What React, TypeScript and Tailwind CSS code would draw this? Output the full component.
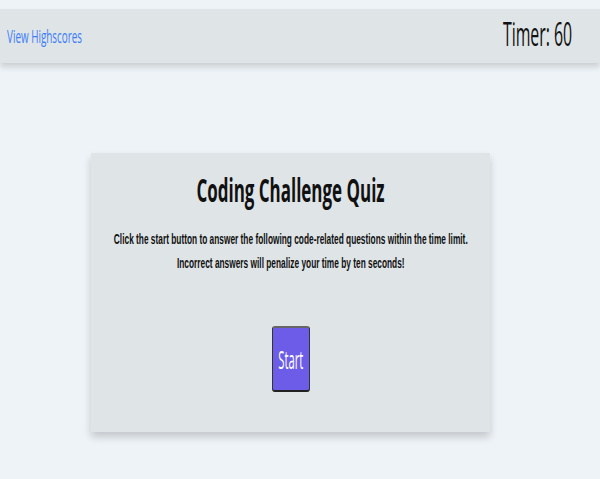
import React from "react";

export default function App() {
    return (
        <div className="min-h-[479px] bg-[#eef3f7] pt-[9px] pb-[47px] font-['Open_Sans',sans-serif]">
            {/* header bar */}
            <header className="h-[54px] bg-[#dfe4e7] shadow-[0_4px_6px_rgba(0,0,0,0.15)] flex items-center justify-between pl-[7px] pr-[28px]">
                <a href="#" className="block text-[19px] leading-none text-[#3b7df7] scale-x-[0.52] origin-left whitespace-nowrap">
                    View Highscores
                </a>
                <div className="text-[33px] leading-none text-[#111] scale-x-[0.48] origin-right whitespace-nowrap -mt-[6px]">
                    Timer: 60
                </div>
            </header>

            {/* quiz card */}
            <main className="mt-[90px] ml-[91px] w-[399px] h-[279px] bg-[#dfe4e7] shadow-[0_5px_8px_rgba(0,0,0,0.18)] flex flex-col items-center">
                <h1 className="mt-[13px] text-[32px] leading-[48px] font-bold text-[#111] scale-x-[0.53] whitespace-nowrap">
                    Coding Challenge Quiz
                </h1>
                <div className="mt-[13px] text-center font-['Liberation_Sans',sans-serif] font-bold text-[15px] leading-[24px] text-[#111]">
                    <p className="scale-x-[0.555] whitespace-nowrap">
                        Click the start button to answer the following code-related questions within the time limit.
                    </p>
                    <p className="scale-x-[0.555] whitespace-nowrap">Incorrect answers will penalize your time by ten seconds!</p>
                </div>
                <button className="mt-[51px] w-[38px] h-[66px] rounded-[3px] bg-[#6c5ce7] border border-[#333] border-t-2 border-t-[#666] border-b-2 border-b-[#222] flex items-center justify-center">
                    <span className="text-[25px] leading-none text-white scale-x-[0.45] whitespace-nowrap">Start</span>
                </button>
            </main>
        </div>
    );
}
